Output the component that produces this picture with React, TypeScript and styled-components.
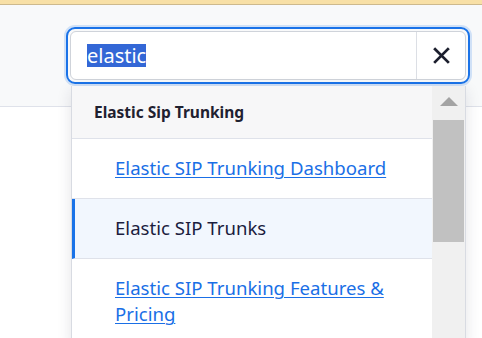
import React from "react";
import styled, {createGlobalStyle} from "styled-components";

const GlobalStyle = createGlobalStyle`
  html, body {
    margin: 0;
    padding: 0;
    background: #ffffff;
    font-family: "Noto Sans", "Liberation Sans", sans-serif;
  }
`;

const Page = styled.div`
  position: relative;
  width: 482px;
  height: 338px;
  overflow: hidden;
  background: #ffffff;
`;

const Banner = styled.div`
  height: 4px;
  background: #f8e0a6;
  border-bottom: 1px solid #cdb98d;
`;

const HeaderBar = styled.div`
  height: 102px;
  background: #f8f9fa;
  border-bottom: 1px solid #dfe2ea;
  display: flex;
  justify-content: flex-end;
  padding: 22px 12px 0 0;
  box-sizing: border-box;
`;

const SearchWrap = styled.div`
  position: relative;
  width: 404px;
  height: 57px;
`;

const FocusRing = styled.div`
  box-sizing: border-box;
  height: 57px;
  padding: 2px;
  border: 2px solid #1a73e8;
  border-radius: 9px;
  box-shadow: 0 0 0 2px rgba(26, 115, 232, 0.18);
`;

const Field = styled.div`
  box-sizing: border-box;
  height: 49px;
  display: flex;
  background: #ffffff;
  border: 1px solid #cfd3da;
  border-radius: 6px;
  overflow: hidden;
`;

const Query = styled.div`
  flex: 1;
  display: flex;
  align-items: center;
  padding-left: 16px;
  font-size: 20px;
  color: #1c1f2e;
`;

const Selected = styled.span`
  background: #3367d6;
  color: #ffffff;
  line-height: 23px;
`;

const ClearButton = styled.div`
  width: 48px;
  border-left: 1px solid #dcdfe5;
  display: flex;
  align-items: center;
  justify-content: center;
`;

const Dropdown = styled.div`
  position: absolute;
  top: 59px;
  left: 5px;
  width: 393px;
  height: 260px;
  display: flex;
  background: #ffffff;
  border-left: 1px solid #d8dbe2;
  border-right: 1px solid #d8dbe2;
  box-shadow: 0 4px 14px rgba(30, 35, 60, 0.12);
`;

const List = styled.div`
  flex: 1;
  display: flex;
  flex-direction: column;
`;

const GroupTitle = styled.div`
  height: 53px;
  box-sizing: border-box;
  display: flex;
  align-items: center;
  padding-left: 22px;
  background: #f7f7f8;
  border-bottom: 1px solid #dfe2ea;
  font-size: 15.5px;
  font-weight: 700;
  color: #1f2130;
`;

const Item = styled.div<{ $active?: boolean }>`
  box-sizing: border-box;
  min-height: 60px;
  padding: 16px 20px 16px ${p => (p.$active ? "40px" : "43px")};
  border-bottom: 1px solid #dfe2ea;
  border-left: ${p => (p.$active ? "3px solid #1a73e8" : "none")};
  background: ${p => (p.$active ? "#f2f7fe" : "#ffffff")};
  font-size: 18.6px;
  line-height: 26px;
  color: #1b1d3f;
`;

const ItemLink = styled.a`
  color: #1a6fe6;
  text-decoration: underline;
  text-underline-offset: 2px;
  text-decoration-thickness: 1px;
`;

const Scrollbar = styled.div`
  width: 33px;
  background: #f0f0f0;
  display: flex;
  flex-direction: column;
  align-items: center;
`;

const ArrowUp = styled.div`
  margin-top: 11px;
  width: 0;
  height: 0;
  border-left: 9px solid transparent;
  border-right: 9px solid transparent;
  border-bottom: 9px solid #a3a3a3;
`;

const Thumb = styled.div`
  margin-top: 14px;
  width: 31px;
  height: 122px;
  background: #c1c1c1;
`;

const ClearIcon = () => (
  <svg width="17" height="17" viewBox="0 0 16 16">
    <path d="M2 2 L14 14 M14 2 L2 14" stroke="#1c1f2e" strokeWidth="2.6" strokeLinecap="square"/>
  </svg>
);

export default function App() {
  return (
    <Page>
      <GlobalStyle/>
      <Banner/>
      <HeaderBar>
        <SearchWrap>
          <FocusRing>
            <Field>
              <Query><Selected>elastic</Selected></Query>
              <ClearButton><ClearIcon/></ClearButton>
            </Field>
          </FocusRing>
          <Dropdown>
            <List>
              <GroupTitle>Elastic Sip Trunking</GroupTitle>
              <Item><ItemLink href="#">Elastic SIP Trunking Dashboard</ItemLink></Item>
              <Item $active>Elastic SIP Trunks</Item>
              <Item><ItemLink href="#">Elastic SIP Trunking Features &amp; Pricing</ItemLink></Item>
            </List>
            <Scrollbar>
              <ArrowUp/>
              <Thumb/>
            </Scrollbar>
          </Dropdown>
        </SearchWrap>
      </HeaderBar>
    </Page>
  );
}
